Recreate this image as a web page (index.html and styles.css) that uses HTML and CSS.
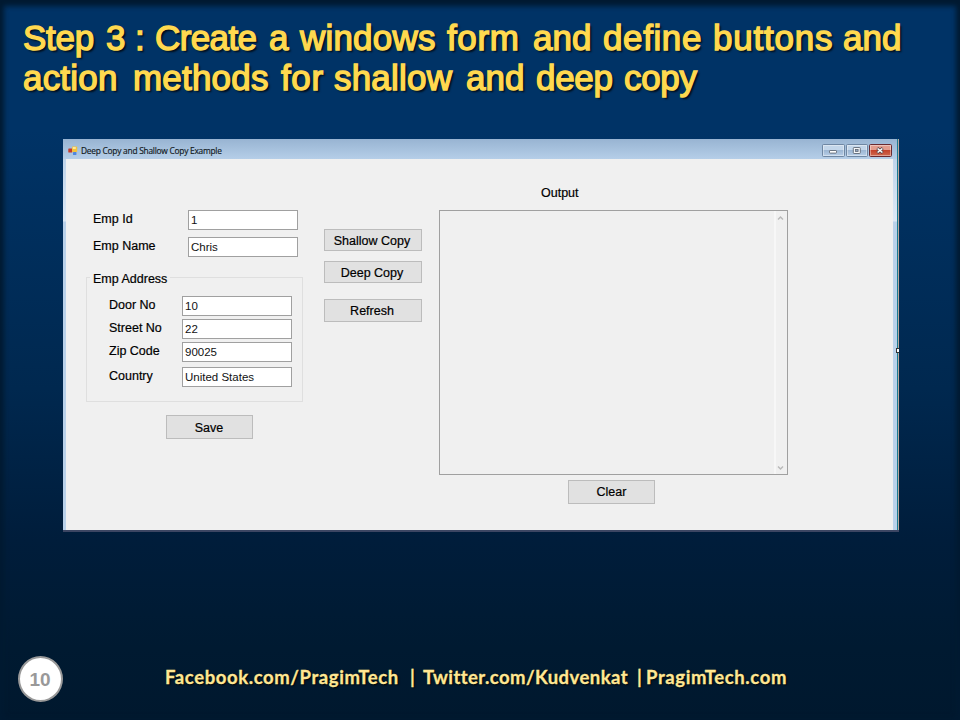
FILE: index.html
```html
<!DOCTYPE html>
<html lang="en">
<head>
<meta charset="utf-8">
<title>Deep Copy and Shallow Copy Example</title>
<link rel="stylesheet" href="styles.css">
</head>
<body>
<main class="slide">
  <h1 class="title">
    <span class="line first"><span class="tight">Step</span> <span>3</span> <span>:</span> <span class="tighter">Create</span> <span>a</span> <span class="normal">windows</span> <span class="loose">form</span> <span>and</span> <span class="loose">define</span> <span class="wide">buttons</span> <span>and</span></span>
    <span class="line second"><span class="normal">action</span> <span class="normal">methods</span> <span class="loose">for</span> <span class="normal">shallow</span> <span>and</span> <span class="tight">deep</span> <span class="tight">copy</span></span>
  </h1>

  <section class="window">
    <header class="titlebar">
      <svg class="app-icon" width="10" height="10" viewBox="0 0 10 10">
        <rect x="0.3" y="2.5" width="4" height="4" rx=".6" fill="#c43a2c"/>
        <rect x="5" y="6" width="3.4" height="3" rx=".6" fill="#4f86df"/>
        <rect x="4" y=".4" width="5.2" height="5.6" rx=".8" fill="#f4c23a"/>
        <rect x="4.8" y="1" width="3" height="2" fill="#fde79a"/>
      </svg>
      <span class="caption">Deep Copy and Shallow Copy Example</span>
      <div class="controls">
        <span class="ctl"><svg width="22" height="12" viewBox="0 0 22 12"><rect x="7.5" y="6.5" width="7" height="2.6" rx=".6" fill="#fff" stroke="#5f6875" stroke-width=".9"/></svg></span>
        <span class="ctl"><svg width="21" height="12" viewBox="0 0 21 12"><rect x="7.3" y="3.5" width="7" height="6" rx=".8" fill="#f4f6f8" stroke="#5f6875" stroke-width=".9"/><rect x="9.5" y="5.5" width="2.6" height="2" fill="#8fa5c0" stroke="#5f6875" stroke-width=".8"/></svg></span>
        <span class="ctl close"><svg width="22" height="12" viewBox="0 0 22 12"><path d="M8.3 4.2L13.7 8.8M13.7 4.2L8.3 8.8" stroke="#59454a" stroke-width="3"/><path d="M8.6 4.5L13.4 8.5M13.4 4.5L8.6 8.5" stroke="#fff" stroke-width="1.6"/></svg></span>
      </div>
    </header>

    <div class="form">
      <div class="employee">
        <div class="field"><label>Emp Id</label><div class="input">1</div></div>
        <div class="field name"><label>Emp Name</label><div class="input">Chris</div></div>
        <div class="group">
          <div class="legend">Emp Address</div>
          <div class="field"><label>Door No</label><div class="input">10</div></div>
          <div class="field"><label>Street No</label><div class="input">22</div></div>
          <div class="field"><label>Zip Code</label><div class="input">90025</div></div>
          <div class="field country"><label>Country</label><div class="input">United States</div></div>
        </div>
        <div class="button large save">Save</div>
      </div>
      <div class="actions">
        <div class="button">Shallow Copy</div>
        <div class="button">Deep Copy</div>
        <div class="button refresh">Refresh</div>
      </div>
      <div class="output">
        <div class="output-label">Output</div>
        <div class="textarea">
          <div class="scrollbar">
            <svg width="7" height="6" viewBox="0 0 7 6"><path d="M1 4.6L3.5 2L6 4.6" fill="none" stroke="#b9b9b9" stroke-width="1.4"/></svg>
            <svg width="7" height="6" viewBox="0 0 7 6"><path d="M1 1.4L3.5 4L6 1.4" fill="none" stroke="#b9b9b9" stroke-width="1.4"/></svg>
          </div>
        </div>
        <div class="button large clear">Clear</div>
      </div>
    </div>
    <i class="handle"></i>
  </section>

  <footer class="footer">
    <div class="page">10</div>
    <div class="links"><span class="fb">Facebook.com/PragimTech</span><span class="bar">|</span><span class="tw">Twitter.com/Kudvenkat</span><span class="bar two">|</span><span class="site">PragimTech.com</span></div>
  </footer>
</main>
</body>
</html>
```

FILE: styles.css
```css
* { box-sizing: border-box; }
body { margin: 0; font-family: "Liberation Sans", sans-serif; }

.slide {
  width: 960px;
  height: 720px;
  overflow: hidden;
  display: flex;
  flex-direction: column;
  background: linear-gradient(#003366 0, #003366 18%, #00284f 54%, #001d3b 75%, #001a31 90%, #00182e 100%);
  box-shadow: inset 0 2px 5px 4px #001a31;
}

.title {
  margin: 0;
  padding: 18px 0 0 23px;
  height: 139px;
  font-size: 35px;
  font-weight: 400;
  line-height: 40px;
  color: #ffd94f;
  -webkit-text-stroke: 1.4px #ffd94f;
  text-shadow: 2px 2px 2px #000c;
}
.line { display: grid; white-space: nowrap; }
.first { grid-template-columns: 83px 29px 20px 114px 31px 147px 86px 70px 110px 130px 60px; }
.second { grid-template-columns: 110px 148px 53px 132px 70px 88px 76px; }
.tight { letter-spacing: -0.3px; }
.tighter { letter-spacing: -0.6px; }
.normal { letter-spacing: 0.2px; }
.loose { letter-spacing: 0.6px; }
.wide { letter-spacing: 0.8px; }

.window {
  position: relative;
  width: 836px;
  height: 393px;
  margin-left: 63px;
  padding: 0 6px 0 3px;
  background: linear-gradient(#b5cde6, #dce8f6 82px, #b9d1ea 83px, #b9d1ea);
  border-bottom: 2px solid #3c4663;
}
.window::after {
  content: "";
  position: absolute;
  top: 0;
  right: 0;
  width: 2px;
  height: 391px;
  background: linear-gradient(90deg, #1d7d92 50%, #b9a79c 50%);
}
.handle {
  position: absolute;
  z-index: 1;
  right: 0;
  top: 209px;
  width: 3px;
  height: 5px;
  background: #fff;
  border: 1px solid #333;
  border-right: 0;
}

.titlebar {
  height: 20px;
  margin: 0 -4px 0 -3px;
  padding: 0 3px 0 5px;
  display: flex;
  background: linear-gradient(#98b4d2, #b5cee8);
}
.app-icon { margin-top: 7px; }
.caption {
  margin: 5px 0 0 3px;
  font: 8.4px/14px "Open Sans", sans-serif;
  letter-spacing: -0.25px;
  color: #101820;
  white-space: nowrap;
  -webkit-text-stroke: .15px #101820;
}
.controls { display: flex; gap: 1px; margin: 5px 2px 0 auto; }
.ctl {
  height: 13px;
  width: 23px;
  border: 1px solid #6f87a3;
  border-radius: 1.5px;
  box-shadow: inset 0 0 0 1px #ffffff66;
  background: linear-gradient(#c3d6ea 45%, #9db7d4 50%, #b6cde6);
}
.ctl:nth-child(2) { width: 22px; }
.ctl svg { display: block; margin: -1px 0 0 -1px; }
.ctl.close { border-color: #6a2a30; background: linear-gradient(#e39c8d 45%, #c4432c 50%, #cf6a50); }

.form {
  height: 371px;
  padding-left: 20px;
  display: grid;
  grid-template-columns: 217px 98px 349px;
  column-gap: 21px;
  background: #f0f0f0;
  font-size: 12.5px;
  color: #000;
}
.field { display: flex; }
.employee { padding-top: 51px; }
.employee > .field { padding-left: 7px; }
.employee > .field label { width: 95px; }
.employee > .name { margin-top: 7px; }
label { line-height: 18px; -webkit-text-stroke: .2px #000; }
.input {
  width: 110px;
  height: 20px;
  padding-left: 2px;
  border: 1px solid #a0a0a0;
  background: #fff;
  font-size: 11.5px;
  line-height: 18px;
  color: #111;
}
.group {
  height: 125px;
  margin-top: 20px;
  padding-left: 22px;
  border: 1px solid #dfdfdf;
}
.group label { width: 73px; }
.group .field { margin-bottom: 3px; }
.group .country { margin-top: 5px; }
.legend {
  width: 80px;
  height: 16px;
  margin: -8px 0 10px -19px;
  padding-left: 3px;
  line-height: 18px;
  background: #f0f0f0;
  -webkit-text-stroke: .2px #000;
}
.button {
  width: 98px;
  height: 22px;
  padding-right: 2px;
  border: 1px solid #bcbcbc;
  background: #e1e1e1;
  text-align: center;
  line-height: 22px;
  -webkit-text-stroke: .2px #000;
}
.large { width: 87px; height: 24px; padding-right: 1px; line-height: 24px; }
.save { margin: 13px 0 0 80px; }
.actions { padding-top: 70px; display: flex; flex-direction: column; gap: 10px; }
.refresh { margin-top: 6px; height: 23px; }
.output { margin-left: -4px; width: 349px; }
.output-label { padding: 26px 0 0 102px; height: 51px; line-height: 16px; -webkit-text-stroke: .2px #000; }
.textarea {
  height: 265px;
  border: 1px solid #a0a0a0;
  display: flex;
  justify-content: flex-end;
}
.scrollbar {
  width: 13px;
  padding: 4px 0 3px 1px;
  border-left: 2px solid #f7f7f7;
  display: flex;
  flex-direction: column;
  justify-content: space-between;
}
.clear { margin: 5px 0 0 129px; padding-right: 0; line-height: 22px; }

.footer { display: flex; margin-top: 124px; padding-left: 18px; }
.page {
  width: 45px;
  height: 46px;
  padding-right: 1px;
  border: 2px solid #999;
  border-radius: 50%;
  background: #fff;
  color: #999;
  font-size: 19px;
  font-weight: 700;
  line-height: 43px;
  text-align: center;
}
.links {
  display: flex;
  margin-left: 102px;
  font: 700 18.5px/42px Lato, sans-serif;
  letter-spacing: .6px;
  color: #ffe793;
  white-space: pre;
  -webkit-text-stroke: .3px #ffe793;
  text-shadow: 1px 1px 2px #000;
}
.fb { width: 245px; }
.bar { width: 13px; }
.tw { width: 214px; letter-spacing: .45px; }
.two { width: 9px; }
```
